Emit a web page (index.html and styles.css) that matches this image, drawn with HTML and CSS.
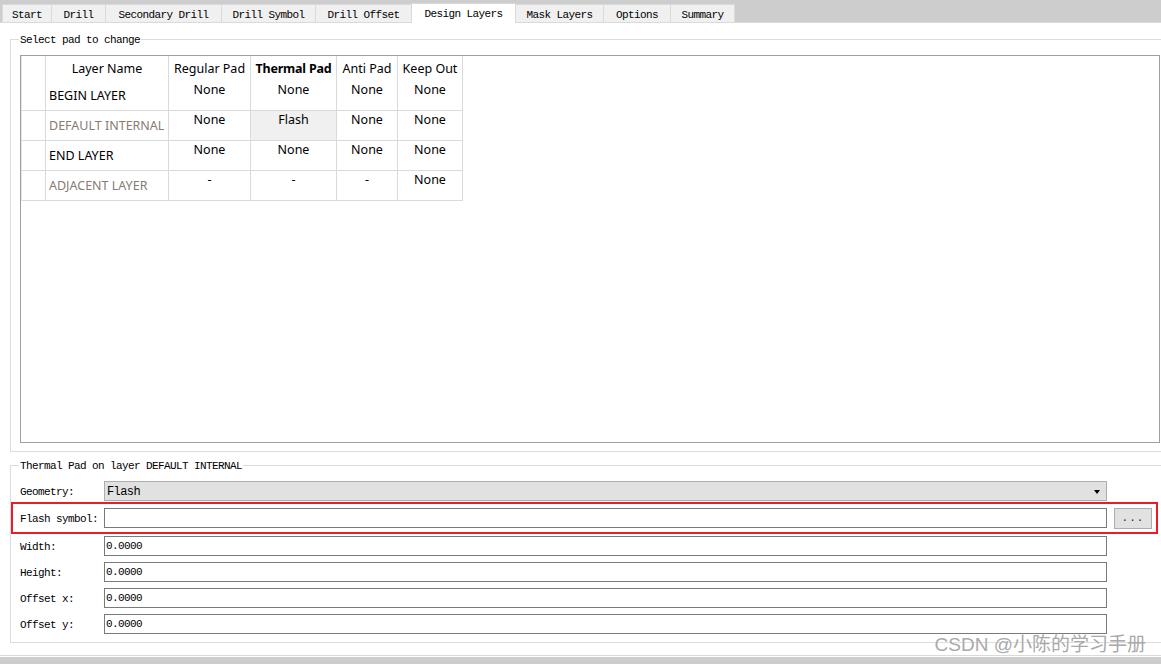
FILE: index.html
```html
<!DOCTYPE html>
<html>
<head>
<meta charset="utf-8">
<link rel="stylesheet" href="styles.css">
</head>
<body>
<div class="window">
  <div class="tabbar">
    <div class="tab">Start</div>
    <div class="tab">Drill</div>
    <div class="tab">Secondary Drill</div>
    <div class="tab">Drill Symbol</div>
    <div class="tab">Drill Offset</div>
    <div class="tab active">Design Layers</div>
    <div class="tab">Mask Layers</div>
    <div class="tab">Options</div>
    <div class="tab">Summary</div>
  </div>

  <fieldset class="group group-select">
    <legend>Select pad to change</legend>
    <div class="gridbox">
      <table class="padtable">
        <thead>
          <tr>
            <th class="rh"></th>
            <th class="c-name">Layer Name</th>
            <th class="c-reg">Regular Pad</th>
            <th class="c-therm bold">Thermal Pad</th>
            <th class="c-anti">Anti Pad</th>
            <th class="c-keep">Keep Out</th>
          </tr>
        </thead>
        <tbody>
          <tr>
            <td class="rh"></td>
            <td class="name">BEGIN LAYER</td>
            <td>None</td><td>None</td><td>None</td><td>None</td>
          </tr>
          <tr>
            <td class="rh"></td>
            <td class="name dim">DEFAULT INTERNAL</td>
            <td>None</td><td class="sel">Flash</td><td>None</td><td>None</td>
          </tr>
          <tr>
            <td class="rh"></td>
            <td class="name">END LAYER</td>
            <td>None</td><td>None</td><td>None</td><td>None</td>
          </tr>
          <tr>
            <td class="rh"></td>
            <td class="name dim">ADJACENT LAYER</td>
            <td>-</td><td>-</td><td>-</td><td>None</td>
          </tr>
        </tbody>
      </table>
    </div>
  </fieldset>

  <fieldset class="group group-props">
    <legend>Thermal Pad on layer DEFAULT INTERNAL</legend>
    <div class="field">
      <label>Geometry:</label>
      <div class="select"><span>Flash</span><span class="arrow"></span></div>
    </div>
    <div class="field field-hl">
      <label>Flash symbol:</label>
      <div class="input"></div>
      <div class="browse">...</div>
    </div>
    <div class="field field-first">
      <label>Width:</label>
      <div class="input">0.0000</div>
    </div>
    <div class="field">
      <label>Height:</label>
      <div class="input">0.0000</div>
    </div>
    <div class="field">
      <label>Offset x:</label>
      <div class="input">0.0000</div>
    </div>
    <div class="field">
      <label>Offset y:</label>
      <div class="input">0.0000</div>
    </div>
  </fieldset>

  <div class="statusbar"><div class="statusfill"></div></div>

  <div class="watermark">CSDN @小陈的学习手册</div>
</div>
</body>
</html>
```

FILE: styles.css
```css
html, body {
  margin: 0;
  padding: 0;
  background: #ffffff;
}

body {
  width: 1161px;
  height: 664px;
  overflow: hidden;
  font-family: "Liberation Mono", "DejaVu Sans Mono", monospace;
  font-size: 11px;
  letter-spacing: -0.6px;
  color: #000;
}

.window {
  position: relative;
  width: 1161px;
  height: 664px;
  overflow: hidden;
}

/* ---------- tabs ---------- */
.tabbar {
  display: flex;
  align-items: flex-end;
  height: 22px;
  padding-left: 2px;
  background: #cdcdcd;
  border-bottom: 1px solid #dadada;
}

.tab {
  box-sizing: border-box;
  height: 18px;
  padding-top: 2px;
  line-height: 16px;
  text-align: center;
  background: #f0f0f0;
  border-top: 1px solid #dadada;
  border-right: 1px solid #dadada;
  white-space: nowrap;
}

.tab:first-child { border-left: 1px solid #dadada; }
.tab:nth-child(1) { width: 50px; }
.tab:nth-child(2) { width: 54px; }
.tab:nth-child(3) { width: 116px; }
.tab:nth-child(4) { width: 94px; }
.tab:nth-child(5) { width: 96px; }
.tab:nth-child(6) { width: 104px; }
.tab:nth-child(7) { width: 88px; }
.tab:nth-child(8) { width: 67px; }
.tab:nth-child(9) { width: 64px; }

.tab.active {
  height: 20px;
  padding-top: 2px;
  line-height: 17px;
  margin-bottom: -1px;
  background: #ffffff;
  border-left: 1px solid #dadada;
  margin-left: -1px;
  width: 105px;
}

/* ---------- group boxes ---------- */
.group {
  box-sizing: border-box;
  width: 1180px;
  margin: 0 0 0 10px;
  border: 1px solid #dcdcdc;
  padding: 9px 0 8px 9px;
  min-width: 0;
}

.group legend {
  padding: 2px 1px 0;
  margin-left: -1px;
  line-height: 12px;
  white-space: nowrap;
}

.group-select { margin-top: 9px; }
.group-props { margin-top: 6px; }

/* ---------- pad table ---------- */
.gridbox {
  box-sizing: border-box;
  width: 1140px;
  height: 388px;
  border: 1px solid #a0a0a0;
}

.padtable {
  border-collapse: separate;
  border-spacing: 0;
  table-layout: fixed;
  font-family: "Noto Sans", "Open Sans", sans-serif;
  font-size: 12.5px;
  letter-spacing: 0;
  color: #000;
}

.padtable th,
.padtable td {
  box-sizing: border-box;
  padding: 0;
  border-right: 1px solid #dadada;
  text-align: center;
  white-space: nowrap;
  font-weight: normal;
}

.padtable th {
  height: 25px;
  line-height: 16px;
  vertical-align: middle;
}

.padtable th.bold { font-weight: bold; letter-spacing: -0.2px; }

.padtable td {
  height: 30px;
  border-bottom: 1px solid #dadada;
  vertical-align: top;
  line-height: 16px;
  padding-top: 1px;
}

.padtable .rh { width: 25px; }
.padtable .c-name { width: 123px; }
.padtable .c-reg { width: 82px; }
.padtable .c-therm { width: 86px; }
.padtable .c-anti { width: 61px; }
.padtable .c-keep { width: 65px; }

.padtable td.rh { border-left: 1px solid #e4e4e4; }
.padtable th.rh { border-left: 1px solid #e4e4e4; }

.padtable td.name {
  text-align: left;
  vertical-align: middle;
  padding: 1px 0 0 3px;
}

.padtable td.dim { color: #877b74; }
.padtable td.sel { background: #f0f0f0; }

/* ---------- property rows ---------- */
.field {
  display: flex;
  align-items: center;
  height: 20px;
  margin-top: 6px;
}

.group-props .field:first-of-type { margin-top: 0; }
.field-first { margin-top: 2px; }

.field label {
  width: 84px;
  flex: none;
  white-space: nowrap;
  padding-top: 2px;
}

.select,
.input {
  box-sizing: border-box;
  width: 1003px;
  height: 20px;
  flex: none;
}

.select {
  display: flex;
  align-items: center;
  justify-content: space-between;
  padding: 1px 6px 0 2px;
  background: #e1e1e1;
  border: 1px solid #adadad;
  font-size: 12px;
}

.arrow {
  width: 0;
  height: 0;
  border-left: 3.5px solid transparent;
  border-right: 3.5px solid transparent;
  border-top: 4px solid #000;
}

.input {
  border: 1px solid #7a7a7a;
  background: #fff;
  padding: 1px 0 0 1px;
  line-height: 17px;
}

.field-hl {
  box-sizing: border-box;
  width: 1147px;
  height: 32px;
  margin: 1px 0 0 -9px;
  padding: 4px 0 3px 7px;
  border: 2px solid #ea1c24;
  align-items: flex-start;
}

.field-hl label { line-height: 20px; padding-top: 1px; }

.browse {
  box-sizing: border-box;
  width: 38px;
  height: 21px;
  margin-left: 7px;
  background: #e1e1e1;
  border: 1px solid #adadad;
  text-align: center;
  line-height: 19px;
  letter-spacing: 1px;
  color: #222;
}

/* ---------- bottom ---------- */
.statusbar {
  margin-top: 12px;
  border-top: 1px solid #dadada;
  padding-top: 1px;
}

.statusfill {
  height: 8px;
  background: #cdcdcd;
}

.watermark {
  position: absolute;
  right: 15px;
  bottom: 8px;
  font-family: "Liberation Sans", "Noto Sans CJK SC", sans-serif;
  font-size: 19px;
  letter-spacing: 0;
  line-height: 22px;
  color: #a9a9a9;
  text-shadow: 0 0 1px rgba(255,255,255,0.9);
  white-space: nowrap;
}
```
